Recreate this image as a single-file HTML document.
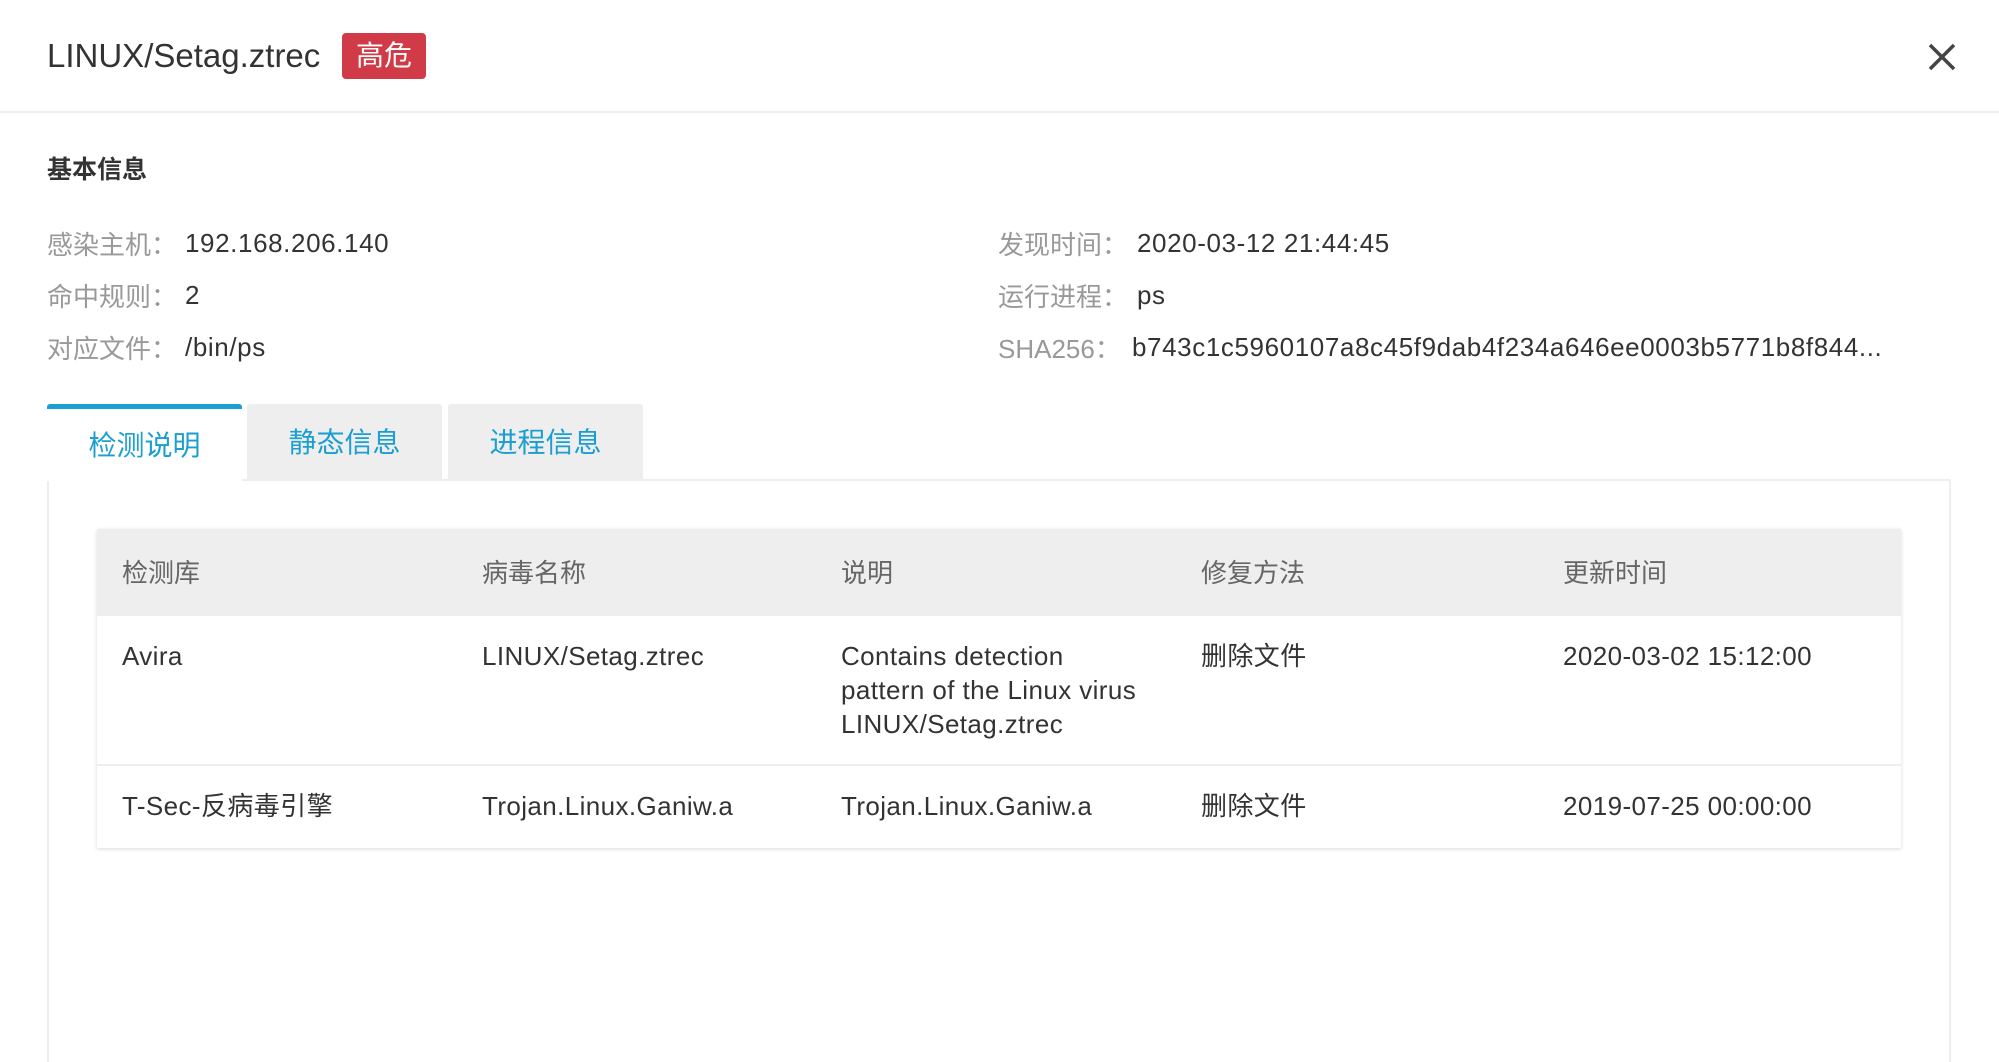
<!DOCTYPE html>
<html style="overflow:hidden;height:1062px"><head><meta charset="utf-8"><style>
*{margin:0;padding:0;box-sizing:border-box}
body{width:1999px;height:1062px;background:#fff;font-family:"Liberation Sans","Noto Sans CJK SC",sans-serif;color:#333;position:relative;overflow:hidden}
.a{position:absolute;white-space:nowrap}
.lb{color:#999;font-size:26px;margin-top:-1px}
.v{font-size:26px;color:#333;letter-spacing:0.6px}
.tab{position:absolute;top:404px;height:75px;background:#eee;color:#1a9fd0;font-size:28px;text-align:center;line-height:78px;border-radius:3px 3px 0 0}
.th{font-size:26px;color:#666;margin-top:-2px}
.td{font-size:26px;color:#333;line-height:34px;letter-spacing:0.4px}
</style></head><body>
<div class="a" style="left:47px;top:37px;font-size:33px;color:#333">LINUX/Setag.ztrec</div>
<div class="a" style="left:342px;top:33px;width:84px;height:46px;background:#d13b47;border-radius:4px;color:#fff;font-size:28px;text-align:center;line-height:46px">高危</div>
<svg class="a" style="left:1928px;top:43px" width="28" height="28" viewBox="0 0 28 28"><path d="M2 2L26 26M26 2L2 26" stroke="#444" stroke-width="3.5"/></svg>
<div class="a" style="left:0;top:111px;width:1999px;height:2px;background:#eee"></div>
<div class="a" style="left:47px;top:150px;font-size:25px;font-weight:bold;color:#333">基本信息</div>

<div class="a lb" style="left:47px;top:226px">感染主机：</div><div class="a v" style="left:185px;top:228px">192.168.206.140</div>
<div class="a lb" style="left:47px;top:278px">命中规则：</div><div class="a v" style="left:185px;top:280px">2</div>
<div class="a lb" style="left:47px;top:330px">对应文件：</div><div class="a v" style="left:185px;top:332px">/bin/ps</div>
<div class="a lb" style="left:998px;top:226px">发现时间：</div><div class="a v" style="left:1137px;top:228px">2020-03-12 21:44:45</div>
<div class="a lb" style="left:998px;top:278px">运行进程：</div><div class="a v" style="left:1137px;top:280px">ps</div>
<div class="a lb" style="left:998px;top:330px">SHA256：</div><div class="a v" style="left:1132px;top:332px">b743c1c5960107a8c45f9dab4f234a646ee0003b5771b8f844...</div>

<div class="a" style="left:47px;top:479px;width:1904px;height:583px;border:2px solid #eee;border-bottom:none"></div>
<div class="tab" style="left:47px;width:195px;background:#fff;border-top:5px solid #1a9fd0;height:77px;line-height:74px">检测说明</div>
<div class="tab" style="left:247px;width:195px">静态信息</div>
<div class="tab" style="left:448px;width:195px">进程信息</div>

<div class="a" style="left:97px;top:529px;width:1804px;height:319px;box-shadow:0 1px 4px rgba(0,0,0,.15);background:#fff"></div>
<div class="a" style="left:97px;top:529px;width:1804px;height:87px;background:#eee"></div>
<div class="a" style="left:97px;top:764px;width:1804px;height:2px;background:#eee"></div>
<div class="a th" style="left:122px;top:555px">检测库</div>
<div class="a th" style="left:482px;top:555px">病毒名称</div>
<div class="a th" style="left:841px;top:555px">说明</div>
<div class="a th" style="left:1201px;top:555px">修复方法</div>
<div class="a th" style="left:1563px;top:555px">更新时间</div>

<div class="a td" style="left:122px;top:639px">Avira</div>
<div class="a td" style="left:482px;top:639px">LINUX/Setag.ztrec</div>
<div class="a td" style="left:841px;top:639px">Contains detection<br>pattern of the Linux virus<br>LINUX/Setag.ztrec</div>
<div class="a td" style="left:1201px;top:639px">删除文件</div>
<div class="a td" style="left:1563px;top:639px">2020-03-02 15:12:00</div>

<div class="a td" style="left:122px;top:789px">T-Sec-反病毒引擎</div>
<div class="a td" style="left:482px;top:789px">Trojan.Linux.Ganiw.a</div>
<div class="a td" style="left:841px;top:789px">Trojan.Linux.Ganiw.a</div>
<div class="a td" style="left:1201px;top:789px">删除文件</div>
<div class="a td" style="left:1563px;top:789px">2019-07-25 00:00:00</div>
</body></html>
